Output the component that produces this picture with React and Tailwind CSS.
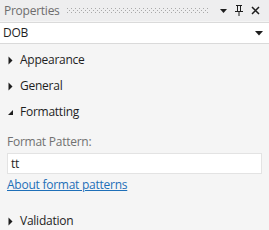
import React from "react";

const font = { fontFamily: '"Segoe UI", "Open Sans", "Noto Sans", sans-serif', letterSpacing: "-0.25px" };

function Caret({ open }) {
  return open ? (
    <svg width="7" height="7" viewBox="0 0 7 7" className="shrink-0">
      <path d="M6 1 L6 6 L1 6 Z" fill="#1e1e1e" />
    </svg>
  ) : (
    <svg width="7" height="9" viewBox="0 0 7 9" className="shrink-0">
      <path d="M1.5 0.5 L5.5 4.5 L1.5 8.5 Z" fill="#1e1e1e" />
    </svg>
  );
}

function Section({ title, open }) {
  return (
    <div className="flex h-[26px] items-center gap-[6px] pl-[7px] text-[12px] text-[#1e1e1e]">
      <div className="flex w-[7px] justify-center">
        <Caret open={open} />
      </div>
      <span>{title}</span>
    </div>
  );
}

export default function App() {
  return (
    <div className="h-[230px] w-[269px] overflow-hidden bg-[#f5f5f5]" style={font}>
      {/* title bar */}
      <div className="flex h-[21px] items-center bg-[#eeeeef] pl-[4px] pr-[9px]">
        <span className="text-[12px] text-[#6d6d6d]">Properties</span>
        <svg className="ml-[7px] mr-[12px] h-[5px] flex-1" height="5">
          <defs>
            <pattern id="grip" width="4" height="4" patternUnits="userSpaceOnUse">
              <rect x="0" y="0" width="1" height="1" fill="#a9a9a9" />
              <rect x="2" y="2" width="1" height="1" fill="#a9a9a9" />
            </pattern>
          </defs>
          <rect width="100%" height="5" fill="url(#grip)" />
        </svg>
        <div className="flex items-center gap-[8px]">
          <svg width="7" height="4" viewBox="0 0 7 4">
            <path d="M0 0 H7 L3.5 4 Z" fill="#1e1e1e" />
          </svg>
          <svg width="8" height="11" viewBox="0 0 8 11">
            <path d="M1 0.5 H7 M2.5 0.5 V6.5 M5.5 0.5 V6.5 M0 6.5 H8 M4 6.5 V11" stroke="#1e1e1e" strokeWidth="1" fill="none" />
          </svg>
          <svg width="9" height="9" viewBox="0 0 9 9">
            <path d="M1 1 L8 8 M8 1 L1 8" stroke="#1e1e1e" strokeWidth="1.5" />
          </svg>
        </div>
      </div>

      {/* object combo */}
      <div className="mt-[1px] flex h-[22px] items-center border-y border-[#dadada] bg-white pl-[3px] pr-[6px] text-[12px] text-[#1e1e1e]">
        <span className="flex-1">DOB</span>
        <svg width="8" height="5" viewBox="0 0 8 5">
          <path d="M0 0 H8 L4 4.5 Z" fill="#1e1e1e" />
        </svg>
      </div>

      <div className="pt-[3px]">
        <Section title="Appearance" />
        <Section title="General" />
        <Section title="Formatting" open />
      </div>

      <div className="pl-[7px] pr-[7px] pt-[9px]">
        <div className="text-[12px] leading-[16px] text-[#717171]">Format Pattern:</div>
        <div className="mt-[3px] flex h-[21px] items-center border border-[#e3e3e3] bg-white pl-[3px] text-[12px] text-[#1e1e1e]">
          tt
        </div>
        <a href="#" className="mt-[3px] block text-[12px] leading-[16px] text-[#1e6fb8] underline">
          About format patterns
        </a>
      </div>

      <div className="pt-[15px]">
        <Section title="Validation" />
      </div>
    </div>
  );
}
